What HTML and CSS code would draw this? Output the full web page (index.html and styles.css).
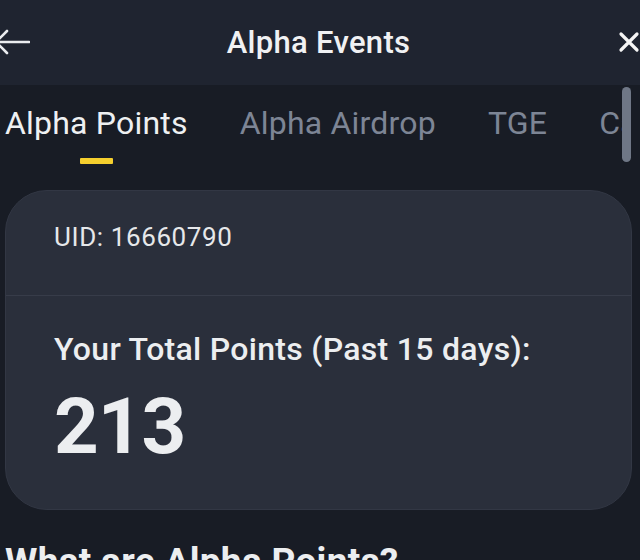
FILE: index.html
```html
<!DOCTYPE html>
<html lang="en">
<head>
<meta charset="utf-8">
<title>Alpha Events</title>
<link rel="stylesheet" href="styles.css">
</head>
<body>
<div class="screen">
  <header class="topbar">
    <svg class="back" width="34" height="30" viewBox="0 0 34 30" aria-hidden="true">
      <path d="M33 15 H2 M11 4 L0 15 L11 26" fill="none" stroke="#eaecef" stroke-width="2.6" stroke-linecap="round" stroke-linejoin="round"/>
    </svg>
    <h1 class="title">Alpha Events</h1>
    <svg class="close" width="22" height="22" viewBox="0 0 22 22" aria-hidden="true">
      <path d="M3 3 L19 19 M19 3 L3 19" fill="none" stroke="#f5f5f5" stroke-width="3.2" stroke-linecap="round"/>
    </svg>
  </header>

  <nav class="tabs">
    <div class="tab-track">
      <div class="tab active">Alpha Points<span class="indicator"></span></div>
      <div class="tab">Alpha Airdrop</div>
      <div class="tab">TGE</div>
      <div class="tab">Campaigns</div>
    </div>
    <span class="scrollbar"></span>
  </nav>

  <section class="card">
    <div class="card-top">
      <div class="uid">UID: 16660790</div>
    </div>
    <div class="card-bottom">
      <div class="label">Your Total Points (Past 15 days):</div>
      <div class="points">213</div>
    </div>
  </section>

  <h2 class="section-title">What are Alpha Points?</h2>
</div>
</body>
</html>
```

FILE: styles.css
```css
* { box-sizing: border-box; }
html, body {
  margin: 0;
  padding: 0;
  background: #181c25;
  overflow: hidden;
}
body {
  font-family: Roboto, "Noto Sans", "DejaVu Sans", sans-serif;
  color: #eaecef;
}
.screen {
  width: 640px;
  height: 560px;
  overflow: hidden;
  position: relative;
}
.topbar {
  height: 85px;
  background: #1f2430;
  display: flex;
  align-items: center;
  justify-content: center;
  position: relative;
  padding-right: 3px;
}
.back {
  position: absolute;
  left: -4px;
  top: 27px;
}
.close {
  position: absolute;
  left: 618px;
  top: 31px;
}
.title {
  margin: 0;
  font-size: 31px;
  font-weight: 500;
  letter-spacing: 0.3px;
  line-height: 36px;
  color: #f0f1f3;
}
.tabs {
  height: 104px;
  position: relative;
}
.tab-track {
  width: 622px;
  height: 104px;
  overflow: hidden;
  display: flex;
  align-items: flex-start;
  padding-left: 5px;
  padding-top: 20px;
  white-space: nowrap;
}
.tab {
  font-size: 32px;
  letter-spacing: 0.2px;
  color: #7d8595;
  position: relative;
  line-height: 36px;
  margin-right: 52px;
  flex: none;
}
.tab.active {
  color: #eef0f2;
}
.indicator {
  position: absolute;
  left: 50%;
  margin-left: -16px;
  top: 53px;
  width: 33px;
  height: 6px;
  background: #f5cf2e;
  border-radius: 1px;
}
.scrollbar {
  position: absolute;
  left: 622px;
  top: 2px;
  width: 9px;
  height: 75px;
  border-radius: 5px;
  background: #6f7786;
}
.card {
  margin: 1px 8px 0 5px;
  height: 320px;
  background: #2a2f3b;
  border: 1px solid #323744;
  border-radius: 42px;
  display: flex;
  flex-direction: column;
}
.card-top {
  height: 105px;
  padding: 32px 0 0 48px;
  border-bottom: 1px solid #373c49;
}
.uid {
  font-size: 26px;
  letter-spacing: 0.6px;
  line-height: 28px;
  color: #e6e8ea;
}
.card-bottom {
  padding: 35px 0 0 48px;
}
.label {
  font-size: 32px;
  font-weight: 500;
  letter-spacing: 0.3px;
  line-height: 36px;
  color: #eceef0;
}
.points {
  font-size: 78px;
  font-weight: 700;
  letter-spacing: -1px;
  line-height: 80px;
  margin-top: 20px;
  color: #eceef0;
}
.section-title {
  margin: 32px 0 0 5px;
  font-size: 37px;
  font-weight: 700;
  letter-spacing: 0.3px;
  line-height: 40px;
  color: #eceef0;
  white-space: nowrap;
}
```
